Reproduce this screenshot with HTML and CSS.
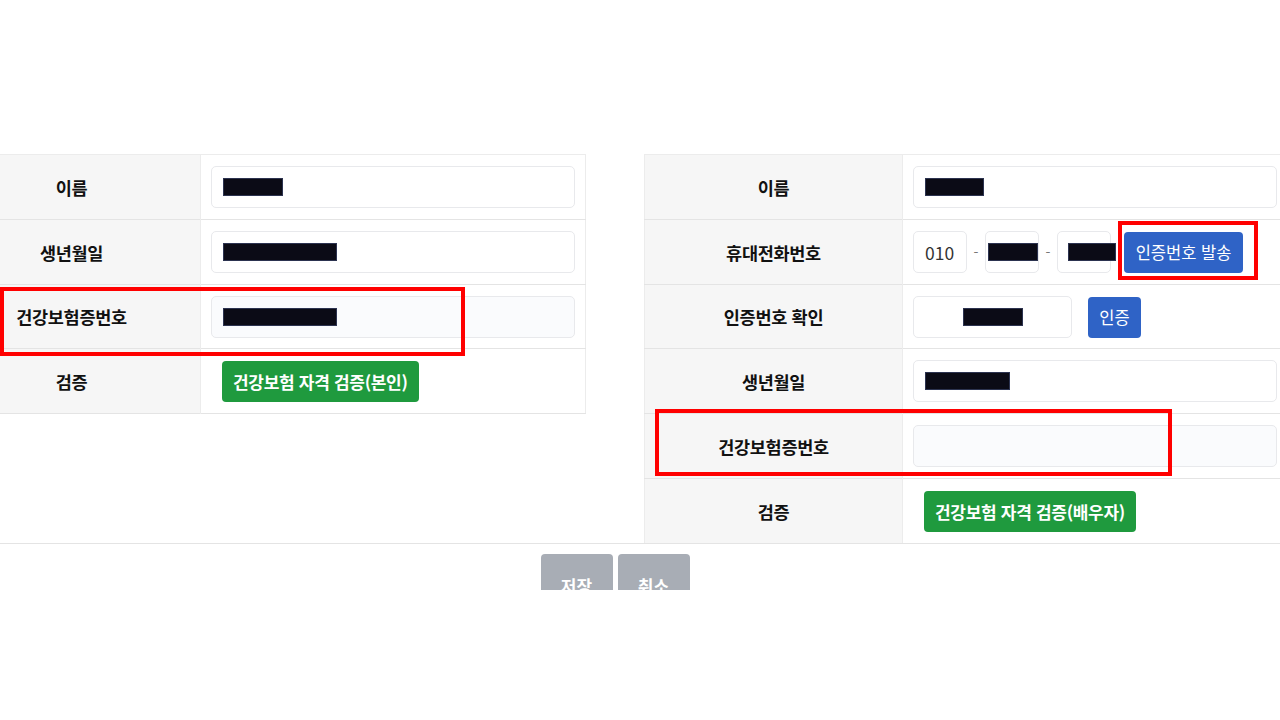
FILE: index.html
```html
<!DOCTYPE html>
<html lang="ko">
<head>
    <meta charset="UTF-8">
    <meta name="viewport" content="width=device-width, initial-scale=1.0">
    <title>건강보험 자격 검증</title>
    <link rel="stylesheet" href="styles.css">
</head>
<body>
    <div class="page">
        <div class="forms">
            <!-- 본인 -->
            <table class="infoTable">
                <tr>
                    <th>이름</th>
                    <td><div class="field"><span class="redact" style="width: 60px;"></span></div></td>
                </tr>
                <tr>
                    <th>생년월일</th>
                    <td><div class="field"><span class="redact" style="width: 114px;"></span></div></td>
                </tr>
                <tr>
                    <th>건강보험증번호</th>
                    <td><div class="field readonly"><span class="redact" style="width: 114px;"></span></div></td>
                </tr>
                <tr>
                    <th>검증</th>
                    <td><button class="btn green">건강보험 자격 검증(본인)</button></td>
                </tr>
            </table>

            <!-- 배우자 -->
            <table class="infoTable">
                <tr>
                    <th>이름</th>
                    <td><div class="field"><span class="redact" style="width: 59px;"></span></div></td>
                </tr>
                <tr>
                    <th>휴대전화번호</th>
                    <td>
                        <div class="phoneRow">
                            <div class="field small">010</div>
                            <span class="dash">-</span>
                            <div class="field small"><span class="redact" style="width: 50px;"></span></div>
                            <span class="dash">-</span>
                            <div class="field small last"><span class="redact" style="width: 48px;"></span></div>
                            <button class="btn blue sendBtn">인증번호 발송</button>
                        </div>
                    </td>
                </tr>
                <tr>
                    <th>인증번호 확인</th>
                    <td>
                        <div class="phoneRow">
                            <div class="field codeField"><span class="redact" style="width: 60px;"></span></div>
                            <button class="btn blue authBtn">인증</button>
                        </div>
                    </td>
                </tr>
                <tr>
                    <th>생년월일</th>
                    <td><div class="field"><span class="redact" style="width: 85px;"></span></div></td>
                </tr>
                <tr>
                    <th>건강보험증번호</th>
                    <td><div class="field readonly"></div></td>
                </tr>
                <tr>
                    <th>검증</th>
                    <td><button class="btn green">건강보험 자격 검증(배우자)</button></td>
                </tr>
            </table>
        </div>

        <div class="actions">
            <button class="btn gray">저장</button>
            <button class="btn gray">취소</button>
        </div>

        <!-- 표시 박스 -->
        <div class="mark" style="left: 0; top: 287px; width: 465px; height: 69px;"></div>
        <div class="mark" style="left: 1118px; top: 221px; width: 140px; height: 59px;"></div>
        <div class="mark" style="left: 655px; top: 409px; width: 517px; height: 67px;"></div>
    </div>
</body>
</html>
```

FILE: styles.css
```css
html, body {
    margin: 0;
    background-color: #fff;
    color: #111;
    font-family: "Noto Sans CJK KR", "Noto Sans", sans-serif;
}

.page {
    position: relative;
    width: 1280px;
    height: 720px;
    overflow: hidden;
    padding-top: 154px;
    box-sizing: border-box;
}

.forms {
    display: flex;
    align-items: flex-start;
    gap: 58px;
    width: 1346px;
    margin-left: -58px;
    border-bottom: 1px solid #e4e4e4;
}

.infoTable {
    width: 644px;
    border-collapse: collapse;
    border-top: 1px solid #ececec;
    border-left: 1px solid #ececec;
    border-right: 1px solid #ececec;
    table-layout: fixed;
}

.infoTable:first-child {
    border-bottom: 1px solid #e4e4e4;
}

.infoTable tr {
    border-bottom: 1px solid #e4e4e4;
}

.infoTable tr:last-child {
    border-bottom: none;
}

.infoTable th {
    width: 257px;
    height: 64px;
    padding: 0;
    background-color: #f6f6f6;
    border-right: 1px solid #ececec;
    font-size: 17.5px;
    font-weight: 700;
    text-align: center;
    letter-spacing: -0.3px;
}

.infoTable td {
    padding: 11px 10px 11px 10px;
    height: 42px;
}

.infoTable tr:nth-child(3) td {
    padding-bottom: 10px;
}

.infoTable tr:nth-child(3) th {
    height: 63px;
}

.field {
    display: flex;
    align-items: center;
    height: 42px;
    box-sizing: border-box;
    padding: 0 11px;
    border: 1px solid #e8e9ec;
    border-radius: 5px;
    background-color: #fff;
    font-size: 17.5px;
    color: #333;
}

.field.readonly {
    background-color: #fafbfd;
}

.redact {
    display: inline-block;
    flex-shrink: 0;
    height: 18px;
    background-color: #0b0b16;
    border: 1px solid #2c3350;
    box-sizing: border-box;
}

.phoneRow {
    display: flex;
    align-items: center;
}

.field.small {
    width: 54px;
    padding: 0 0 0 11px;
}

.field.small .redact {
    margin-left: -9px;
}

.field.last .redact {
    margin-left: -1px;
}

.dash {
    width: 18px;
    text-align: center;
    color: #777;
    font-size: 14px;
}

.codeField {
    width: 159px;
    justify-content: center;
}

.btn {
    border: none;
    border-radius: 4px;
    color: #fff;
    font-family: "Noto Sans CJK KR", "Noto Sans", sans-serif;
    cursor: pointer;
}

.btn.green {
    height: 41px;
    margin-left: 11px;
    padding: 0 11px;
    background-color: #1f9a3e;
    font-size: 17px;
    font-weight: 700;
    letter-spacing: -0.3px;
}

.btn.blue {
    height: 41px;
    background-color: #2f63c6;
    font-size: 16.5px;
}

.sendBtn {
    margin-left: 13px;
    width: 119px;
    padding: 0;
}

.authBtn {
    margin-left: 16px;
    width: 53px;
    padding: 0;
}

.actions {
    display: flex;
    justify-content: center;
    gap: 5px;
    width: 1346px;
    margin-left: -58px;
    margin-top: 10px;
    height: 36px;
    overflow: hidden;
}

.btn.gray {
    flex-shrink: 0;
    width: 72px;
    height: 62px;
    background-color: #a8adb5;
    font-size: 17px;
    font-weight: 700;
}

.mark {
    position: absolute;
    border: 4px solid #f00;
    box-sizing: border-box;
}
```
